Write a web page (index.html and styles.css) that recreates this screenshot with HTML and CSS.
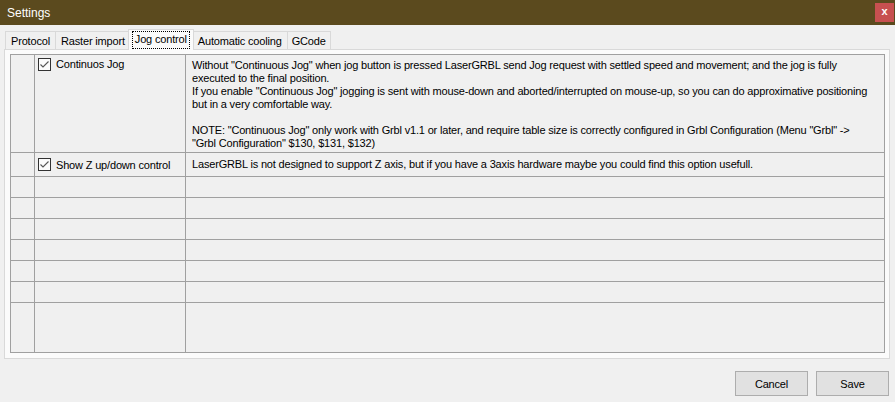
FILE: index.html
```html
<!DOCTYPE html>
<html>
<head>
<meta charset="utf-8">
<link rel="stylesheet" href="styles.css">
</head>
<body>
<div class="window">
  <div class="titlebar">
    <span class="title">Settings</span>
    <span class="close">x</span>
  </div>
  <div class="content">
    <div class="tabs">
      <div class="tab">Protocol</div>
      <div class="tab">Raster import</div>
      <div class="tab active"><span class="focus">Jog control</span></div>
      <div class="tab">Automatic cooling</div>
      <div class="tab">GCode</div>
    </div>
    <div class="page">
      <div class="grid">
        <div class="cell"></div>
        <div class="cell opt top">
          <svg class="chk" width="13" height="13" viewBox="0 0 13 13"><rect x="0.5" y="0.5" width="12" height="12" fill="#fbfbfb" stroke="#333"/><polyline points="2.5,6.5 5,9 10.5,3.5" fill="none" stroke="#555" stroke-width="1.1"/></svg>
          <span>Continuos Jog</span>
        </div>
        <div class="cell desc top">Without "Continuous Jog" when jog button is pressed LaserGRBL send Jog request with settled speed and movement; and the jog is fully<br>executed to the final position.<br>If you enable "Continuous Jog" jogging is sent with mouse-down and aborted/interrupted on mouse-up, so you can do approximative positioning<br>but in a very comfortable way.<br><br>NOTE: "Continuous Jog" only work with Grbl v1.1 or later, and require table size is correctly configured in Grbl Configuration (Menu "Grbl" -&gt;<br>"Grbl Configuration" $130, $131, $132)</div>

        <div class="cell"></div>
        <div class="cell opt">
          <svg class="chk" width="13" height="13" viewBox="0 0 13 13"><rect x="0.5" y="0.5" width="12" height="12" fill="#fbfbfb" stroke="#333"/><polyline points="2.5,6.5 5,9 10.5,3.5" fill="none" stroke="#555" stroke-width="1.1"/></svg>
          <span>Show Z up/down control</span>
        </div>
        <div class="cell desc">LaserGRBL is not designed to support Z axis, but if you have a 3axis hardware maybe you could find this option usefull.</div>

        <div class="cell"></div><div class="cell"></div><div class="cell"></div>
        <div class="cell"></div><div class="cell"></div><div class="cell"></div>
        <div class="cell"></div><div class="cell"></div><div class="cell"></div>
        <div class="cell"></div><div class="cell"></div><div class="cell"></div>
        <div class="cell"></div><div class="cell"></div><div class="cell"></div>
        <div class="cell"></div><div class="cell"></div><div class="cell"></div>
        <div class="cell"></div><div class="cell"></div><div class="cell"></div>
      </div>
    </div>
    <div class="footer">
      <button class="btn">Cancel</button>
      <button class="btn">Save</button>
    </div>
  </div>
</div>
</body>
</html>
```

FILE: styles.css
```css
* { box-sizing: border-box; }
html, body {
  margin: 0;
  padding: 0;
  background: #f0f0f0;
}
body {
  font-family: "Liberation Sans", Arial, sans-serif;
  font-size: 11px;
  letter-spacing: -0.17px;
  color: #000;
}
.window {
  width: 895px;
  height: 402px;
  display: flex;
  flex-direction: column;
  overflow: hidden;
}
.titlebar {
  height: 25px;
  background: #5b4a1e;
  display: flex;
  align-items: center;
  justify-content: space-between;
  padding-left: 7px;
  padding-right: 1px;
}
.title {
  color: #fff;
  font-size: 12px;
  letter-spacing: 0;
}
.close {
  width: 19px;
  height: 19px;
  background: #c75050;
  color: #fff;
  font-weight: bold;
  font-size: 11px;
  display: flex;
  align-items: center;
  justify-content: center;
  line-height: 1;
  padding-bottom: 2px;
}
.content {
  flex: 1;
  display: flex;
  flex-direction: column;
  padding-top: 4px;
}
.tabs {
  display: flex;
  align-items: flex-end;
  padding-left: 5px;
  height: 21px;
  margin-bottom: -1px;
  position: relative;
  z-index: 1;
}
.tab {
  height: 18px;
  margin-bottom: 1px;
  padding: 0 5px;
  border: 1px solid #d9d9d9;
  border-bottom: none;
  background: #f0f0f0;
  display: flex;
  align-items: center;
  margin-left: -1px;
  white-space: nowrap;
}
.tab:first-child { margin-left: 0; }
.tab:last-child { padding: 0 4px; }
.tab.active {
  height: 21px;
  margin-bottom: 0;
  background: #fbfbfb;
  padding: 0 3px;
  margin-left: -3px;
  margin-right: -1px;
  position: relative;
  z-index: 2;
  align-items: flex-start;
  padding-top: 1px;
}
.focus {
  border: 1px dotted #000;
  padding: 1px 2px 2px;
  line-height: 13px;
}
.page {
  margin: 0 5px 0 4px;
  height: 310px;
  border: 1px solid #d9d9d9;
  background: #fbfbfb;
  padding: 4px 4px 5px 5px;
}
.grid {
  display: grid;
  grid-template-columns: 23px 150px 1fr;
  grid-template-rows: 97px 23px repeat(6, 20px) 49px;
  gap: 1px;
  background: #a0a0a0;
  border: 1px solid #a0a0a0;
  width: 875px;
  height: 299px;
}
.cell {
  background: #f0f0f0;
}
.opt {
  display: flex;
  align-items: center;
  padding-left: 3px;
  gap: 5px;
  white-space: nowrap;
}
.opt.top {
  align-items: flex-start;
  padding-top: 3px;
}
.opt.top span { line-height: 13px; }
.chk { flex: none; display: block; }
.desc {
  padding-left: 6px;
  line-height: 13px;
  display: flex;
  align-items: center;
  white-space: nowrap;
}
.desc.top {
  display: block;
  padding-top: 4px;
}
.footer {
  display: flex;
  justify-content: flex-end;
  gap: 8px;
  padding-top: 12px;
  padding-right: 6px;
}
.btn {
  width: 73px;
  height: 25px;
  background: #e1e1e1;
  border: 1px solid #adadad;
  font-family: "Liberation Sans", Arial, sans-serif;
  font-size: 11px;
  letter-spacing: -0.17px;
  color: #000;
  padding: 0;
}
```
